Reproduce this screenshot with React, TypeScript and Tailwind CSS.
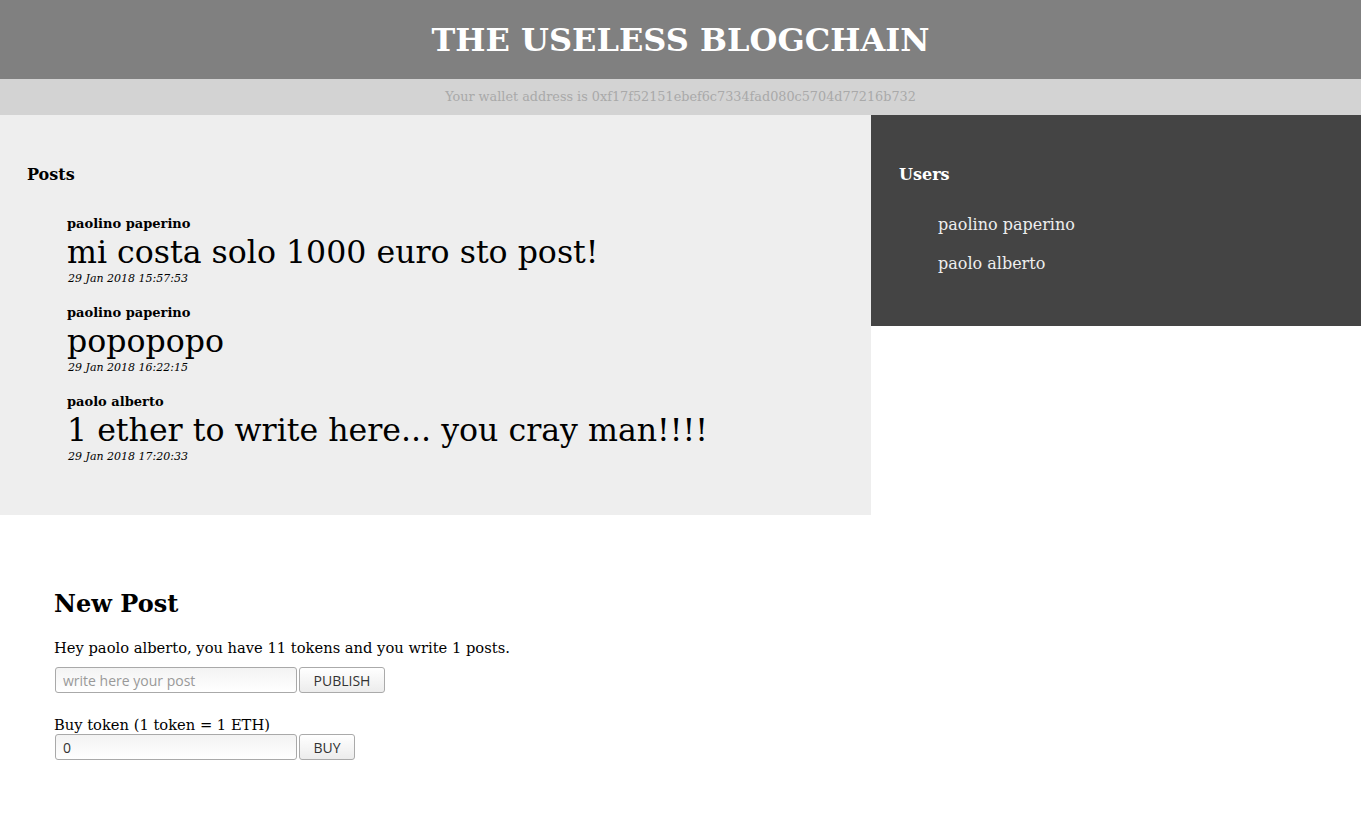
const posts = [
  { author: 'paolino paperino', text: 'mi costa solo 1000 euro sto post!', date: '29 Jan 2018 15:57:53' },
  { author: 'paolino paperino', text: 'popopopo', date: '29 Jan 2018 16:22:15' },
  { author: 'paolo alberto', text: '1 ether to write here... you cray man!!!!', date: '29 Jan 2018 17:20:33' },
];

const users = ['paolino paperino', 'paolo alberto'];

const serif = "font-['DejaVu_Serif',serif]";
const inputCls =
  "h-[26px] w-[242px] rounded-[3px] border border-[#a9a9a9] bg-gradient-to-b from-[#f3f3f3] to-white px-[7px] text-[14px] text-[#333] font-['Open_Sans',sans-serif] placeholder:text-[#999] outline-none";
const btnCls =
  "h-[26px] rounded-[3px] border border-[#aaa] bg-gradient-to-b from-white to-[#ececec] px-[13.5px] text-[14px] text-[#333] font-['Open_Sans',sans-serif]";

const App = () => {
  return (
    <div className={`${serif} min-h-[817px] bg-white text-black`}>
      <header className="flex h-[79px] items-center justify-center bg-[#808080]">
        <h1 className="text-[32px] font-bold text-white">THE USELESS BLOGCHAIN</h1>
      </header>
      <div className="flex h-[36px] items-center justify-center bg-[#d3d3d3] text-[12.8px] text-[#a9a9a9]">
        Your wallet address is 0xf17f52151ebef6c7334fad080c5704d77216b732
      </div>
      <div className="flex items-start">
        <section className="w-[871px] bg-[#eeeeee] px-[27px] pt-[50px] pb-[51px]">
          <h4 className="text-[16px] leading-[19px] font-bold">Posts</h4>
          <ul className="mt-[32px] space-y-[19px] pl-[40px]">
            {posts.map((p, idx) => (
              <li key={idx}>
                <div className="text-[13px] leading-[15px] font-bold">{p.author}</div>
                <div className="mt-[2px] text-[31.6px] leading-[38px]">{p.text}</div>
                <div className="mt-[1px] text-[11px] leading-[14px] italic pl-[1px]">{p.date}</div>
              </li>
            ))}
          </ul>
        </section>
        <aside className="flex-1 bg-[#444444] px-[28px] pt-[50px] pb-[53px] text-white">
          <h4 className="text-[16px] leading-[19px] font-bold">Users</h4>
          <ul className="mt-[31px] space-y-[20px] pl-[39px]">
            {users.map((u) => (
              <li key={u} className="text-[16px] leading-[19px] text-[#eee]">
                {u}
              </li>
            ))}
          </ul>
        </aside>
      </div>
      <section className="px-[54px] pt-[75px]">
        <h2 className="text-[24px] leading-[28px] font-bold">New Post</h2>
        <p className="mt-[21px] text-[14.7px] leading-[18px]">
          Hey paolo alberto, you have 11 tokens and you write 1 posts.
        </p>
        <div className="mt-[10px] flex gap-[2px] pl-[1px]">
          <input className={inputCls} placeholder="write here your post" />
          <button className={btnCls}>PUBLISH</button>
        </div>
        <div className="mt-[23px] text-[14.7px] leading-[18px]">Buy token (1 token = 1 ETH)</div>
        <div className="flex gap-[2px] pl-[1px]">
          <input className={inputCls} defaultValue="0" />
          <button className={btnCls}>BUY</button>
        </div>
      </section>
    </div>
  );
};

export default App;
